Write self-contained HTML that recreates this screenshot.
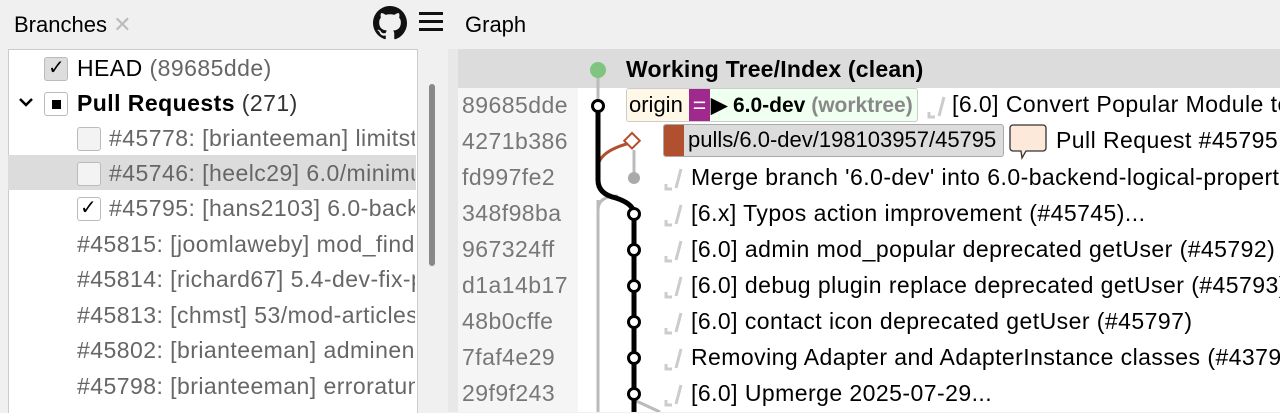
<!DOCTYPE html><html><head><style>
body{margin:0;width:1280px;height:412px;overflow:hidden;background:#f0f0f0;font-family:"Liberation Sans",sans-serif;font-size:23px;letter-spacing:0.45px;color:#000;position:relative}
.a{position:absolute;white-space:nowrap}
.cb{position:absolute;width:22px;height:22px;border:1px solid #bbb;border-radius:3px;background:#f3f3f3}
.g{color:#666}
.h{color:#777;left:462px}
.m{left:691px}
</style></head><body>
<div class="a" style="left:14px;top:12px;font-size:22px;letter-spacing:0">Branches <span style="color:#bbb">✕</span></div>
<svg class="a" style="left:373px;top:6px" width="34" height="34" viewBox="0 0 16 16"><path fill="#111" d="M8 0C3.58 0 0 3.58 0 8c0 3.54 2.290 6.53 5.47 7.59.4.07.55-.17.55-.38v-1.33c-2.230.48-2.700-1.070-2.700-1.070-.36-.92-.89-1.170-.89-1.170-.73-.5.06-.49.06-.49.8.06 1.230.83 1.230.83.71 1.220 1.870.87 2.330.66.07-.52.28-.87.51-1.070-1.780-.2-3.650-.89-3.650-3.950 0-.87.31-1.590.82-2.150-.08-.2-.36-1.020.08-2.120 0 0 .67-.21 2.200.82.64-.18 1.320-.27 2-.27s1.360.09 2 .27c1.530-1.040 2.200-.82 2.200-.82.44 1.100.16 1.920.08 2.120.51.56.82 1.270.82 2.150 0 3.070-1.870 3.750-3.650 3.950.29.25.54.73.54 1.480v2.200c0 .21.15.46.55.38A8.010 8.010 0 0016 8c0-4.420-3.580-8-8-8z"/></svg>
<div class="a" style="left:419px;top:12px;width:24px;height:3px;background:#111;box-shadow:0 8px 0 #111,0 16px 0 #111"></div>
<div class="a" style="left:465px;top:12px;font-size:22px;letter-spacing:0">Graph</div>
<div class="a" style="left:8px;top:49px;width:408px;height:363px;background:#fff;border:1px solid #ccc;border-bottom:none"></div>
<div class="a" style="left:8px;top:155px;width:408px;height:35px;background:#dcdcdc"></div>
<div class="a" style="left:429px;top:84px;width:6px;height:182px;background:#888;border-radius:3px"></div>
<div class="a" style="left:448px;top:49px;width:10px;height:363px;background:#e8e8e8"></div>
<div class="cb" style="left:44px;top:57px;background:#ddd"></div><div class="a" style="left:48px;top:55px;font-size:20px">✓</div>
<div class="a" style="left:77px;top:55px">HEAD <span class="g">(89685dde)</span></div>
<svg class="a" style="left:18px;top:96px" width="16" height="12"><path d="M2 3l6 6 6-6" stroke="#000" stroke-width="2.5" fill="none"/></svg>
<div class="cb" style="left:44px;top:92px;background:#fff"></div><div class="a" style="left:52px;top:100px;width:9px;height:9px;background:#000"></div>
<div class="a" style="left:77px;top:90px"><b>Pull Requests</b> <span style="color:#333">(271)</span></div>
<div class="cb" style="left:77px;top:127px"></div><div class="a g" style="left:109px;top:125px;width:306px;overflow:hidden">#45778: [brianteeman] limitsta</div>
<div class="cb" style="left:77px;top:162px"></div><div class="a g" style="left:109px;top:160px;width:306px;overflow:hidden">#45746: [heelc29] 6.0/minimum</div>
<div class="cb" style="left:77px;top:197px;background:#fff"></div><div class="a" style="left:80px;top:195px;font-size:20px">✓</div><div class="a g" style="left:109px;top:195px;width:306px;overflow:hidden">#45795: [hans2103] 6.0-backend</div>
<div class="a g" style="left:77px;top:231px;width:338px;overflow:hidden">#45815: [joomlaweby] mod_finder</div>
<div class="a g" style="left:77px;top:266px;width:338px;overflow:hidden">#45814: [richard67] 5.4-dev-fix-p</div>
<div class="a g" style="left:77px;top:302px;width:338px;overflow:hidden">#45813: [chmst] 53/mod-articles</div>
<div class="a g" style="left:77px;top:337px;width:338px;overflow:hidden">#45802: [brianteeman] adminenu</div>
<div class="a g" style="left:77px;top:373px;width:338px;overflow:hidden">#45798: [brianteeman] erroratum</div>
<div class="a" style="left:458px;top:49px;width:822px;height:363px;background:#fff"></div>
<div class="a" style="left:458px;top:49px;width:822px;height:39px;background:#dcdcdc"></div>
<div class="a" style="left:458px;top:88px;width:120px;height:324px;background:#f5f5f5"></div>
<svg class="a" style="left:0;top:0" width="1280" height="412">
<path d="M598 70V106" stroke="#bbb" stroke-width="3" fill="none"/>
<path d="M634 150V178" stroke="#bbb" stroke-width="3" fill="none"/>
<path d="M598 200V412" stroke="#bbb" stroke-width="3" fill="none"/>
<path d="M598 210Q598 196 618 196" stroke="#bbb" stroke-width="3" fill="none"/>
<path d="M634 400Q645 405 660 412" stroke="#bbb" stroke-width="3" fill="none"/>
<path d="M598 166Q600 150 634 142" stroke="#b0502e" stroke-width="3" fill="none"/>
<path d="M598 106V180Q598 194 616 198Q634 204 634 214V412" stroke="#000" stroke-width="5" fill="none"/>
<circle cx="598" cy="70" r="8" fill="#7fc47f"/>
<circle cx="634" cy="178" r="6" fill="#aaa"/>
<rect x="627" y="135" width="11" height="11" transform="rotate(45 632 140)" fill="#fff" stroke="#b0502e" stroke-width="2"/>
<g fill="#fff" stroke="#000" stroke-width="3"><circle cx="598" cy="106" r="5.5"/><circle cx="634" cy="214" r="5.5"/><circle cx="634" cy="250" r="5.5"/><circle cx="634" cy="286" r="5.5"/><circle cx="634" cy="322" r="5.5"/><circle cx="634" cy="358" r="5.5"/><circle cx="634" cy="394" r="5.5"/></g>
<g fill="none" stroke="#ccc" stroke-width="3">
<path d="M929 112v5h6M944 97l-5 19"/><path d="M666 184v5h6M681 169l-5 19"/><path d="M666 220v5h6M681 205l-5 19"/><path d="M666 256v5h6M681 241l-5 19"/><path d="M666 292v5h6M681 277l-5 19"/><path d="M666 328v5h6M681 313l-5 19"/><path d="M666 364v5h6M681 349l-5 19"/><path d="M666 400v5h6M681 385l-5 19"/>
</g>
</svg>
<div class="a" style="left:626px;top:56px;font-weight:bold;letter-spacing:0.2px">Working Tree/Index (clean)</div>
<div class="a h" style="top:92px">89685dde</div>
<div class="a h" style="top:128px">4271b386</div>
<div class="a h" style="top:164px">fd997fe2</div>
<div class="a h" style="top:200px">348f98ba</div>
<div class="a h" style="top:236px">967324ff</div>
<div class="a h" style="top:272px">d1a14b17</div>
<div class="a h" style="top:308px">48b0cffe</div>
<div class="a h" style="top:344px">7faf4e29</div>
<div class="a h" style="top:380px">29f9f243</div>
<div class="a" style="left:626px;top:88px;width:290px;height:32px;border:1px solid #ccc;border-radius:3px;background:#effff0;overflow:hidden;letter-spacing:0">
<div class="a" style="left:0;top:0;width:62px;height:32px;background:#fff8e6"></div>
<div class="a" style="left:2px;top:3px;font-size:22px">origin</div>
<div class="a" style="left:62px;top:0;width:21px;height:32px;background:#a0298e;color:#fff;text-align:center;line-height:32px">=</div>
<div class="a" style="left:84px;top:4px;font-size:21px"><b>▶ 6.0-dev</b> <b style="color:#888">(worktree)</b></div></div>
<div class="a" style="left:952px;top:91px">[6.0] Convert Popular Module to</div>
<div class="a" style="left:663px;top:124px;width:339px;height:31px;border:1px solid #aaa;border-radius:3px;background:#dcdcdc;overflow:hidden">
<div class="a" style="left:0;top:0;width:20px;height:31px;background:#b0502e"></div>
<div class="a" style="left:24px;top:2px;font-size:22px;letter-spacing:0">pulls/6.0-dev/198103957/45795</div></div>
<svg class="a" style="left:1009px;top:124px" width="40" height="36"><path d="M4 1h30a3 3 0 013 3v20a3 3 0 01-3 3H17l-4 7-1-7H4a3 3 0 01-3-3V4a3 3 0 013-3z" fill="#fde9d9" stroke="#333" stroke-width="1.3"/></svg>
<div class="a" style="left:1056px;top:127px">Pull Request #45795: 6</div>
<div class="a m" style="top:164px">Merge branch '6.0-dev' into 6.0-backend-logical-properties</div>
<div class="a m" style="top:200px">[6.x] Typos action improvement (#45745)...</div>
<div class="a m" style="top:236px">[6.0] admin mod_popular deprecated getUser (#45792)</div>
<div class="a m" style="top:272px">[6.0] debug plugin replace deprecated getUser (#45793)</div>
<div class="a m" style="top:308px">[6.0] contact icon deprecated getUser (#45797)</div>
<div class="a m" style="top:344px">Removing Adapter and AdapterInstance classes (#43794)</div>
<div class="a m" style="top:380px">[6.0] Upmerge 2025-07-29...</div>
</body></html>
